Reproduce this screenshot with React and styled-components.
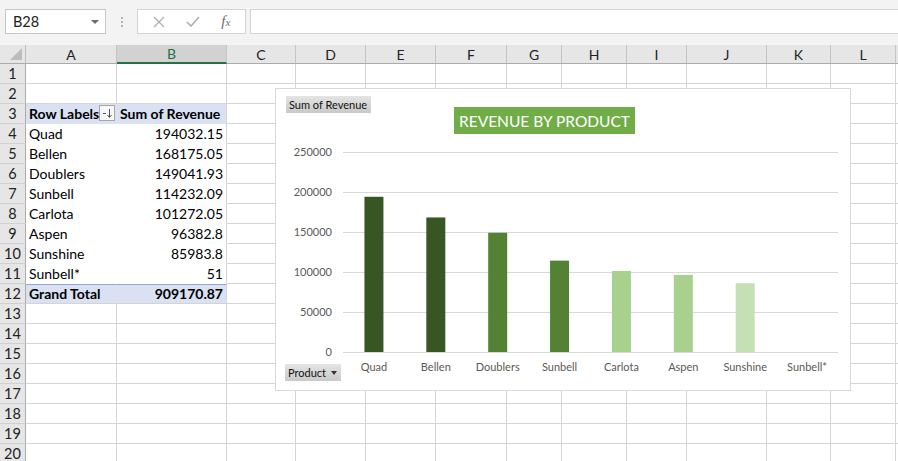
import React from 'react'
import styled, { createGlobalStyle } from 'styled-components'

const GlobalStyle = createGlobalStyle`
  html, body {
    margin: 0;
    padding: 0;
    background: #ffffff;
    overflow: hidden;
  }
  body {
    font-family: Lato, "Liberation Sans", sans-serif;
    color: #000;
  }
`

const COLS = [
  ['A', 91], ['B', 110], ['C', 69], ['D', 70], ['E', 70], ['F', 71],
  ['G', 55], ['H', 65], ['I', 60], ['J', 80], ['K', 64], ['L', 65],
]

const PIVOT = {
  3: { a: 'Row Labels', b: 'Sum of Revenue', kind: 'head' },
  4: { a: 'Quad', b: '194032.15' },
  5: { a: 'Bellen', b: '168175.05' },
  6: { a: 'Doublers', b: '149041.93' },
  7: { a: 'Sunbell', b: '114232.09' },
  8: { a: 'Carlota', b: '101272.05' },
  9: { a: 'Aspen', b: '96382.8' },
  10: { a: 'Sunshine', b: '85983.8' },
  11: { a: 'Sunbell*', b: '51' },
  12: { a: 'Grand Total', b: '909170.87', kind: 'total' },
}

const SERIES = [
  { name: 'Quad', value: 194032.15, color: '#375623' },
  { name: 'Bellen', value: 168175.05, color: '#375623' },
  { name: 'Doublers', value: 149041.93, color: '#548235' },
  { name: 'Sunbell', value: 114232.09, color: '#548235' },
  { name: 'Carlota', value: 101272.05, color: '#a9d18e' },
  { name: 'Aspen', value: 96382.8, color: '#a9d18e' },
  { name: 'Sunshine', value: 85983.8, color: '#c5e0b4' },
  { name: 'Sunbell*', value: 51, color: '#c5e0b4' },
]

/* ---------- formula bar ---------- */

const FormulaBar = styled.div`
  height: 45px;
  background: #f3f3f3;
  display: flex;
  align-items: flex-start;
  padding: 9px 0 0 5px;
  box-sizing: border-box;
`

const NameBox = styled.div`
  width: 101px;
  height: 25px;
  box-sizing: border-box;
  background: #fff;
  border: 1px solid #c6c6c6;
  display: flex;
  align-items: center;
  justify-content: space-between;
  padding: 0 6px 0 7px;
  font-size: 14.5px;
  color: #222;
`

const Caret = styled.span`
  width: 0;
  height: 0;
  border-left: 4px solid transparent;
  border-right: 4px solid transparent;
  border-top: 4px solid #6d6d6d;
`

const Grip = styled.div`
  width: 31px;
  height: 25px;
  display: flex;
  flex-direction: column;
  align-items: center;
  justify-content: center;
  gap: 2px;
  span {
    width: 2px;
    height: 2px;
    background: #b4b4b4;
  }
`

const ActionBox = styled.div`
  width: 109px;
  height: 25px;
  box-sizing: border-box;
  background: #fff;
  border: 1px solid #d4d4d4;
  display: flex;
  align-items: center;
  justify-content: space-around;
  padding: 0 4px;
  color: #a8a8a8;
`

const Fx = styled.span`
  font-family: "Liberation Serif", serif;
  font-style: italic;
  font-size: 15px;
  color: #6e6e6e;
  b {
    font-size: 11px;
    font-weight: normal;
  }
`

const FormulaInput = styled.div`
  flex: 1;
  height: 25px;
  margin-left: 4px;
  box-sizing: border-box;
  background: #fff;
  border: 1px solid #d4d4d4;
  border-right: none;
`

/* ---------- sheet ---------- */

const Sheet = styled.div`
  position: relative;
  display: grid;
  grid-template-columns: 26px ${COLS.map(c => c[1] + 'px').join(' ')} 1fr;
  grid-template-rows: 19px repeat(20, 20px);
  font-size: 14px;
`

const Corner = styled.div`
  background: #e6e6e6;
  border-right: 1px solid #bdbdbd;
  border-bottom: 1px solid #ababab;
  box-sizing: border-box;
  position: relative;
  &::after {
    content: '';
    position: absolute;
    right: 3px;
    bottom: 3px;
    border-left: 12px solid transparent;
    border-bottom: 12px solid #bcbcbc;
  }
`

const ColHead = styled.div`
  background: ${p => (p.$active ? '#d2d2d2' : '#e6e6e6')};
  color: ${p => (p.$active ? '#217346' : '#222')};
  border-right: 1px solid #c4c4c4;
  border-bottom: ${p => (p.$active ? '2px solid #217346' : '1px solid #ababab')};
  box-sizing: border-box;
  display: flex;
  align-items: center;
  justify-content: center;
  font-size: 14px;
`

const RowHead = styled.div`
  background: #e6e6e6;
  border-right: 1px solid #ababab;
  border-bottom: 1px solid #d0d0d0;
  box-sizing: border-box;
  display: flex;
  align-items: flex-end;
  justify-content: center;
  padding-bottom: 1px;
  font-size: 14.5px;
  color: #222;
`

const pivotBg = kind => (kind === 'head' || kind === 'total' ? '#d9e1f2' : '#fff')

const Cell = styled.div`
  box-sizing: border-box;
  border-right: 1px solid ${p => (p.$inPivot && !p.$lastPivotCol ? 'transparent' : '#d4d4d4')};
  border-bottom: 1px solid ${p => (p.$inPivot && p.$kind !== 'total' ? 'transparent' : '#d4d4d4')};
  border-top: ${p => (p.$kind === 'total' ? '1px solid #8ea9db' : 'none')};
  background: ${p => (p.$inPivot ? pivotBg(p.$kind) : '#fff')};
  font-weight: ${p => (p.$kind ? 700 : 400)};
  display: flex;
  align-items: flex-end;
  justify-content: ${p => (p.$right ? 'flex-end' : 'space-between')};
  padding: 0 3px 1px 3px;
  white-space: nowrap;
  overflow: visible;
  color: #000;
`

const SortButton = styled.span`
  width: 16px;
  height: 16px;
  box-sizing: border-box;
  border: 1px solid #a6a6a6;
  background: #f7f7f7;
  display: flex;
  align-items: center;
  justify-content: center;
  margin-bottom: 1px;
  margin-right: -2px;
`

/* ---------- chart ---------- */

const Chart = styled.div`
  position: absolute;
  left: 275px;
  top: 43px;
  width: 576px;
  height: 303px;
  box-sizing: border-box;
  background: #fff;
  border: 1px solid #d9d9d9;
`

const FieldButton = styled.div`
  position: absolute;
  left: ${p => p.$x}px;
  top: ${p => p.$y}px;
  height: 17px;
  padding: 0 4px 0 3px;
  display: flex;
  align-items: center;
  gap: 5px;
  background: linear-gradient(#e4e4e4, #c9c9c9);
  font-size: 11px;
  color: #111;
  white-space: nowrap;
`

const SmallCaret = styled.span`
  width: 0;
  height: 0;
  border-left: 3.5px solid transparent;
  border-right: 3.5px solid transparent;
  border-top: 4px solid #333;
`

const Title = styled.div`
  position: absolute;
  left: 178px;
  top: 18px;
  width: 181px;
  height: 27px;
  background: #70ad47;
  color: #fff;
  font-size: 15.5px;
  display: flex;
  align-items: center;
  justify-content: center;
  white-space: nowrap;
`

const Plot = () => {
  const left = 67
  const right = 562
  const zero = 263
  const per = 40 / 50000
  const band = (right - left) / SERIES.length
  const ticks = [0, 50000, 100000, 150000, 200000, 250000]
  return (
    <svg width="574" height="301" style={{ display: 'block' }}>
      {ticks.map(t => {
        const y = zero - t * per
        return (
          <g key={t}>
            <line x1={left} x2={right} y1={y + 0.5} y2={y + 0.5} stroke="#d9d9d9" />
            <text x="56" y={y + 4} textAnchor="end" fontSize="11" fill="#595959" fontFamily="Lato, sans-serif">
              {t}
            </text>
          </g>
        )
      })}
      {SERIES.map((s, i) => {
        const cx = left + band * i + band / 2
        const h = s.value * per
        return (
          <g key={s.name}>
            <rect x={cx - 9.5} y={zero - h} width="19" height={h} fill={s.color} />
            <text x={cx} y="282" textAnchor="middle" fontSize="11" fill="#595959" fontFamily="Lato, sans-serif">
              {s.name}
            </text>
          </g>
        )
      })}
    </svg>
  )
}

const RevenueChart = () => (
  <Chart>
    <Plot />
    <FieldButton $x={10} $y={7}>Sum of Revenue</FieldButton>
    <Title>REVENUE BY PRODUCT</Title>
    <FieldButton $x={9} $y={275}>
      Product <SmallCaret />
    </FieldButton>
  </Chart>
)

const SortIcon = () => (
  <svg width="11" height="11" viewBox="0 0 11 11">
    <line x1="1" y1="5.5" x2="4" y2="5.5" stroke="#555" />
    <line x1="7.5" y1="1" x2="7.5" y2="9" stroke="#555" />
    <path d="M5.5 7 L7.5 9.5 L9.5 7" fill="none" stroke="#555" />
  </svg>
)

const App = () => {
  const rows = Array.from({ length: 20 }, (_, i) => i + 1)
  return (
    <>
      <GlobalStyle />
      <FormulaBar>
        <NameBox>
          B28 <Caret />
        </NameBox>
        <Grip>
          <span />
          <span />
          <span />
        </Grip>
        <ActionBox>
          <svg width="12" height="12" viewBox="0 0 12 12">
            <path d="M1 1 L11 11 M11 1 L1 11" stroke="#b0b0b0" strokeWidth="1.4" />
          </svg>
          <svg width="14" height="12" viewBox="0 0 14 12">
            <path d="M1 6 L5 10 L13 1" fill="none" stroke="#b0b0b0" strokeWidth="1.6" />
          </svg>
          <Fx>
            f<b>x</b>
          </Fx>
        </ActionBox>
        <FormulaInput />
      </FormulaBar>
      <Sheet>
        <Corner />
        {COLS.map(([name]) => (
          <ColHead key={name} $active={name === 'B'}>
            {name}
          </ColHead>
        ))}
        <ColHead />
        {rows.map(r => {
          const p = PIVOT[r]
          return (
            <React.Fragment key={r}>
              <RowHead>{r}</RowHead>
              <Cell $inPivot={!!p} $kind={p && p.kind}>
                {p && p.a}
                {p && p.kind === 'head' && (
                  <SortButton>
                    <SortIcon />
                  </SortButton>
                )}
              </Cell>
              <Cell $inPivot={!!p} $lastPivotCol $kind={p && p.kind} $right={p && p.kind !== 'head'}>
                {p && p.b}
              </Cell>
              {COLS.slice(2).map(([name]) => (
                <Cell key={name} />
              ))}
              <Cell />
            </React.Fragment>
          )
        })}
        <RevenueChart />
      </Sheet>
    </>
  )
}

export default App
